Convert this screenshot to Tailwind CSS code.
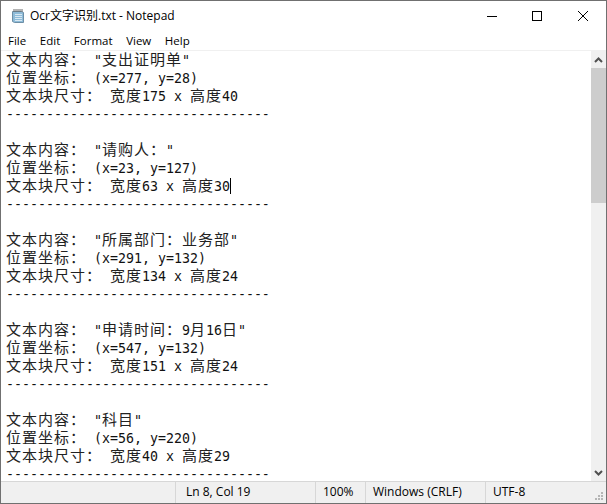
<!DOCTYPE html>
<html lang="zh">
<head>
<meta charset="UTF-8">
<title>Ocr文字识别.txt - Notepad</title>
<script src="https://cdn.jsdelivr.net/npm/@tailwindcss/browser@4"></script>
</head>
<body class="bg-white">
<div class="w-[607px] h-[504px] flex flex-col overflow-hidden border border-[#707070] bg-white text-black font-['Open_Sans','Noto_Sans_CJK_SC',sans-serif] text-[12px]">

  <!-- title bar -->
  <div class="h-[30px] flex items-center shrink-0">
    <svg class="ml-[9px] w-[16px] h-[16px]" viewBox="0 0 16 16">
      <path d="M2.5 3.5h9l2 1v10h-9l-2-1z" fill="#8fbcd9" stroke="#6d8fa6"/>
      <path d="M5 6.5h7M5 8.5h7M5 10.5h7M5 12.5h7" stroke="#d8e8f2"/>
      <path d="M4 1v3M6 1v3M8 1v3M10 1v3M12 1v3" stroke="#666"/>
    </svg>
    <span class="ml-[4px]">Ocr文字识别.txt - Notepad</span>
    <div class="ml-auto flex h-full">
      <div class="w-[45px] flex items-center justify-center"><svg class="w-[10px] h-[10px]" viewBox="0 0 10 10"><path d="M0 5.5h10" stroke="#000"/></svg></div>
      <div class="w-[46px] flex items-center justify-center"><svg class="w-[10px] h-[10px]" viewBox="0 0 10 10"><rect x=".5" y=".5" width="9" height="9" fill="none" stroke="#000"/></svg></div>
      <div class="w-[46px] flex items-center justify-center"><svg class="w-[10px] h-[10px]" viewBox="0 0 10 10"><path d="M0 0l10 10M10 0L0 10" stroke="#000"/></svg></div>
    </div>
  </div>

  <!-- menu -->
  <div class="h-[19px] flex items-center gap-[13.6px] pl-[7px] shrink-0 border-b border-[#f0f0f0] box-content text-[11.5px]">
    <span>File</span><span>Edit</span><span>Format</span><span>View</span><span>Help</span>
  </div>

  <!-- editor -->
  <div class="flex-1 flex min-h-0">
    <div class="flex-1 overflow-hidden pl-[5px] font-['DejaVu_Sans_Mono','Noto_Sans_CJK_SC',monospace] text-[13.29px] leading-[18px] text-[#111] [&>div]:whitespace-pre [&>div]:h-[18px] [&>div>span]:text-[15px] [&>div>span]:tracking-[1px] [&>div>span]:text-[#222]">
      <div><span>文本内容：</span> "<span>支出证明单</span>"</div>
      <div><span>位置坐标：</span> (x=277, y=28)</div>
      <div><span>文本块尺寸：</span> <span>宽度</span>175 x <span>高度</span>40</div>
      <div class="leading-[20px]">---------------------------------</div>
      <div></div>
      <div><span>文本内容：</span> "<span>请购人：</span>"</div>
      <div><span>位置坐标：</span> (x=23, y=127)</div>
      <div><span>文本块尺寸：</span> <span>宽度</span>63 x <span>高度</span>30<i class="inline-block w-px h-[16px] bg-black align-[-3px]"></i></div>
      <div class="leading-[20px]">---------------------------------</div>
      <div></div>
      <div><span>文本内容：</span> "<span>所属部门：业务部</span>"</div>
      <div><span>位置坐标：</span> (x=291, y=132)</div>
      <div><span>文本块尺寸：</span> <span>宽度</span>134 x <span>高度</span>24</div>
      <div class="leading-[20px]">---------------------------------</div>
      <div></div>
      <div><span>文本内容：</span> "<span>申请时间：</span>9<span>月</span>16<span>日</span>"</div>
      <div><span>位置坐标：</span> (x=547, y=132)</div>
      <div><span>文本块尺寸：</span> <span>宽度</span>151 x <span>高度</span>24</div>
      <div class="leading-[20px]">---------------------------------</div>
      <div></div>
      <div><span>文本内容：</span> "<span>科目</span>"</div>
      <div><span>位置坐标：</span> (x=56, y=220)</div>
      <div><span>文本块尺寸：</span> <span>宽度</span>40 x <span>高度</span>29</div>
      <div class="leading-[20px]">---------------------------------</div>
    </div>

    <!-- scrollbar -->
    <div class="w-[15px] shrink-0 flex flex-col bg-[#f0f0f0]">
      <div class="h-[17px] flex items-center justify-center"><svg class="w-[9px] h-[6px]" viewBox="0 0 9 6"><path d="M1 5l3.5-3.5L8 5" fill="none" stroke="#505050" stroke-width="2"/></svg></div>
      <div class="h-[135px] bg-[#cdcdcd]"></div>
      <div class="flex-1"></div>
      <div class="h-[17px] flex items-center justify-center"><svg class="w-[9px] h-[6px]" viewBox="0 0 9 6"><path d="M1 1l3.5 3.5L8 1" fill="none" stroke="#505050" stroke-width="2"/></svg></div>
    </div>
  </div>

  <!-- status bar -->
  <div class="h-[22px] shrink-0 flex bg-[#f0f0f0] border-t border-[#d7d7d7] text-[12px] leading-[20px] relative">
    <div class="w-[174px]"></div>
    <div class="w-[140px] pl-[10px] border-l border-[#d7d7d7]">Ln 8, Col 19</div>
    <div class="w-[50px] pl-[7px] border-l border-[#d7d7d7]">100%</div>
    <div class="w-[120px] pl-[7px] border-l border-[#d7d7d7]">Windows (CRLF)</div>
    <div class="flex-1 pl-[7px] border-l border-[#d7d7d7]">UTF-8</div>
    <svg class="absolute right-[2px] bottom-[2px] w-[11px] h-[11px]" viewBox="0 0 11 11"><path d="M8 2h2v2H8zM5 5h2v2H5zM8 5h2v2H8zM2 8h2v2H2zM5 8h2v2H5zM8 8h2v2H8z" fill="#b5b5b5"/></svg>
  </div>
</div>
</body>
</html>
